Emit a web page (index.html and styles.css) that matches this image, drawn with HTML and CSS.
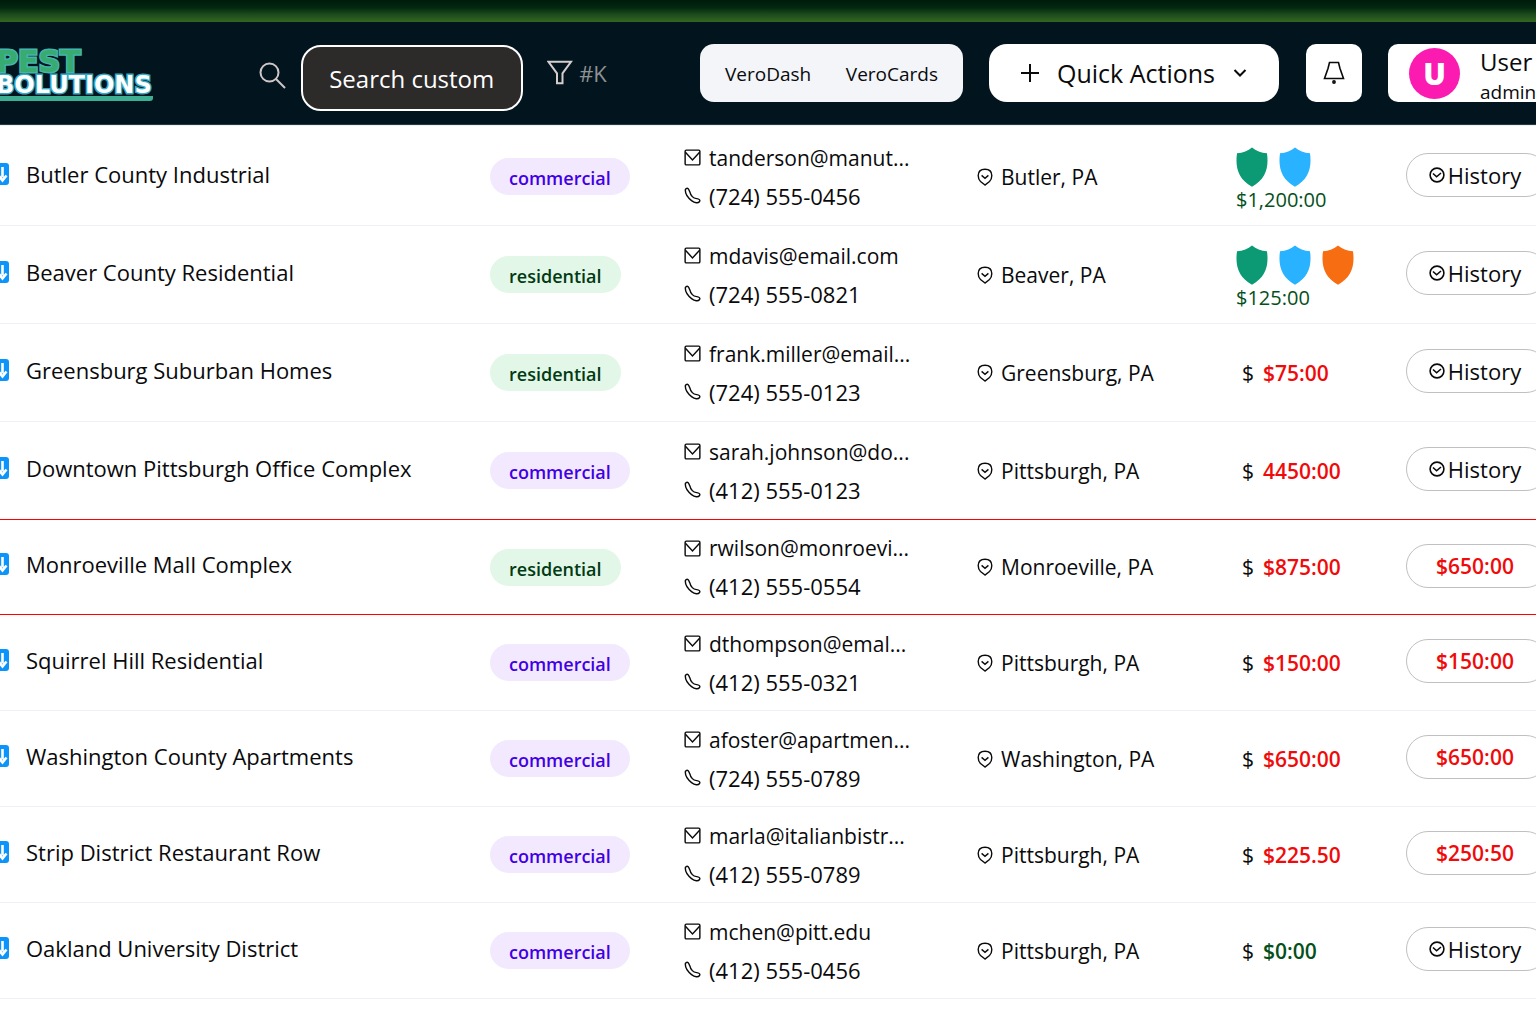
FILE: index.html
```html
<!DOCTYPE html>
<html lang="en">
<head>
<meta charset="utf-8">
<meta name="viewport" content="width=device-width, initial-scale=1">
<title>Customers</title>
<link rel="stylesheet" href="styles.css">
</head>
<body>
<svg class="sprite" aria-hidden="true">
  <symbol id="mail" viewBox="0 0 18 18"><rect x="1.200" y="1.200" width="15.600" height="15.600" rx="1.200"/><path d="M1.500 3.500l7.500 8 7.500-8"/></symbol>
  <symbol id="phone" viewBox="0 0 18 18"><path d="M1.500 2.600C2.500 .8 4.200 .8 5 2.600L6.200 5.200C6.500 6.800 7.300 8.500 8.800 10.200C10.200 11.900 11.600 12.200 13.500 12.300C16.200 12.600 17.300 13.800 16.500 15.400C15 17.400 11.500 17.200 8 14.400C4.300 11.400 1 6.600 1.500 2.600Z"/></symbol>
  <symbol id="pin" viewBox="0 0 16 18"><path d="M8 17L3.500 13.500C1.800 12 1.200 10 1.200 7.600C1.200 3.500 4 1.200 8 1.200S14.800 3.500 14.800 7.600C14.800 10 14.200 12 12.500 13.500Z"/><path d="M4.600 7.400L8 10.300l3.400-2.900"/></symbol>
  <symbol id="check" viewBox="0 0 16 16"><circle cx="8" cy="8" r="6.900"/><path d="M4 6.500l3.600 3.300L12 6"/></symbol>
  <symbol id="shield" viewBox="0 0 32 40"><path d="M16 .5C20 4 25 6 31 6.200C33 21 29.500 32 16 39.800C2.500 32 -1 21 1 6.200C7 6 12 4 16 .5Z"/></symbol>
  <symbol id="sort" viewBox="0 0 18 22"><rect width="18" height="22" rx="3" fill="#0d94fb"/><path d="M11.500 4v10.500M7.500 12.500l4 5 4-5" fill="none" stroke="#fff" stroke-width="2.600"/></symbol>
</svg>

<div class="topband"></div>
<header class="header">
  <a class="logo" href="#" aria-label="Pest Bolutions home"><span class="logo-top">PEST</span><span class="logo-bottom">BOLUTIONS</span></a>
  <form class="search" role="search">
    <svg class="search-icon" viewBox="0 0 28 28" aria-hidden="true"><circle cx="10.500" cy="10.500" r="9"/><path d="M17 17l9 9"/></svg>
    <input class="search-input" type="text" aria-label="Search customers" value="Search custom">
    <button class="filter" type="button" aria-label="Filter"><svg viewBox="0 0 26 26" aria-hidden="true"><path d="M1.500 1.800h22.500l-8.500 11.500v10h-5.500v-10z"/></svg><span>#K</span></button>
  </form>
  <nav class="views"><a href="#">VeroDash</a><a href="#">VeroCards</a></nav>
  <button class="quick" type="button">
    <svg class="plus" viewBox="0 0 18 18" aria-hidden="true"><path d="M9 0v18M0 9h18"/></svg>
    <span>Quick Actions</span>
    <svg class="chevron" viewBox="0 0 14 10" aria-hidden="true"><path d="M1.500 2L7 7.500 12.500 2"/></svg>
  </button>
  <button class="bell" type="button" aria-label="Notifications"><svg viewBox="0 0 22 24" aria-hidden="true"><path d="M6.500 1.500h9l1.500 6 3.500 10h-19l3.500-10z"/><circle cx="11" cy="21" r="1.100"/></svg></button>
  <button class="user" type="button"><span class="avatar">U</span><span class="who"><span class="who-name">User</span><span class="who-mail">admin@</span></span></button>
</header>

<main class="main">
<table class="customers">
  <colgroup><col><col class="c-type"><col class="c-contact"><col class="c-place"><col class="c-balance"><col class="c-action"></colgroup>
  <tbody>
  <tr class="tall">
    <td><div class="name"><svg><use href="#sort"/></svg>Butler County Industrial</div></td>
    <td><span class="tag commercial">commercial</span></td>
    <td><div class="line email"><svg><use href="#mail"/></svg>tanderson@manut...</div><div class="line"><svg><use href="#phone"/></svg>(724) 555-0456</div></td>
    <td><div class="place"><svg><use href="#pin"/></svg>Butler, PA</div></td>
    <td><div class="credit"><div class="shields"><svg class="green"><use href="#shield"/></svg><svg class="blue"><use href="#shield"/></svg></div>$1,200:00</div></td>
    <td><button class="pill" type="button"><svg><use href="#check"/></svg>History</button></td>
  </tr>
  <tr class="tall">
    <td><div class="name"><svg><use href="#sort"/></svg>Beaver County Residential</div></td>
    <td><span class="tag residential">residential</span></td>
    <td><div class="line email"><svg><use href="#mail"/></svg>mdavis@email.com</div><div class="line"><svg><use href="#phone"/></svg>(724) 555-0821</div></td>
    <td><div class="place"><svg><use href="#pin"/></svg>Beaver, PA</div></td>
    <td><div class="credit"><div class="shields"><svg class="green"><use href="#shield"/></svg><svg class="blue"><use href="#shield"/></svg><svg class="orange"><use href="#shield"/></svg></div>$125:00</div></td>
    <td><button class="pill" type="button"><svg><use href="#check"/></svg>History</button></td>
  </tr>
  <tr class="tall">
    <td><div class="name"><svg><use href="#sort"/></svg>Greensburg Suburban Homes</div></td>
    <td><span class="tag residential">residential</span></td>
    <td><div class="line email"><svg><use href="#mail"/></svg>frank.miller@email...</div><div class="line"><svg><use href="#phone"/></svg>(724) 555-0123</div></td>
    <td><div class="place"><svg><use href="#pin"/></svg>Greensburg, PA</div></td>
    <td><div class="balance"><span>$</span><strong>$75:00</strong></div></td>
    <td><button class="pill" type="button"><svg><use href="#check"/></svg>History</button></td>
  </tr>
  <tr class="tall">
    <td><div class="name"><svg><use href="#sort"/></svg>Downtown Pittsburgh Office Complex</div></td>
    <td><span class="tag commercial">commercial</span></td>
    <td><div class="line email"><svg><use href="#mail"/></svg>sarah.johnson@do...</div><div class="line"><svg><use href="#phone"/></svg>(412) 555-0123</div></td>
    <td><div class="place"><svg><use href="#pin"/></svg>Pittsburgh, PA</div></td>
    <td><div class="balance"><span>$</span><strong>4450:00</strong></div></td>
    <td><button class="pill" type="button"><svg><use href="#check"/></svg>History</button></td>
  </tr>
  <tr class="overdue">
    <td><div class="name"><svg><use href="#sort"/></svg>Monroeville Mall Complex</div></td>
    <td><span class="tag residential">residential</span></td>
    <td><div class="line email"><svg><use href="#mail"/></svg>rwilson@monroevi...</div><div class="line"><svg><use href="#phone"/></svg>(412) 555-0554</div></td>
    <td><div class="place"><svg><use href="#pin"/></svg>Monroeville, PA</div></td>
    <td><div class="balance"><span>$</span><strong>$875:00</strong></div></td>
    <td><button class="pill due" type="button">$650:00</button></td>
  </tr>
  <tr>
    <td><div class="name"><svg><use href="#sort"/></svg>Squirrel Hill Residential</div></td>
    <td><span class="tag commercial">commercial</span></td>
    <td><div class="line email"><svg><use href="#mail"/></svg>dthompson@emal...</div><div class="line"><svg><use href="#phone"/></svg>(412) 555-0321</div></td>
    <td><div class="place"><svg><use href="#pin"/></svg>Pittsburgh, PA</div></td>
    <td><div class="balance"><span>$</span><strong>$150:00</strong></div></td>
    <td><button class="pill due" type="button">$150:00</button></td>
  </tr>
  <tr>
    <td><div class="name"><svg><use href="#sort"/></svg>Washington County Apartments</div></td>
    <td><span class="tag commercial">commercial</span></td>
    <td><div class="line email"><svg><use href="#mail"/></svg>afoster@apartmen...</div><div class="line"><svg><use href="#phone"/></svg>(724) 555-0789</div></td>
    <td><div class="place"><svg><use href="#pin"/></svg>Washington, PA</div></td>
    <td><div class="balance"><span>$</span><strong>$650:00</strong></div></td>
    <td><button class="pill due" type="button">$650:00</button></td>
  </tr>
  <tr>
    <td><div class="name"><svg><use href="#sort"/></svg>Strip District Restaurant Row</div></td>
    <td><span class="tag commercial">commercial</span></td>
    <td><div class="line email"><svg><use href="#mail"/></svg>marla@italianbistr...</div><div class="line"><svg><use href="#phone"/></svg>(412) 555-0789</div></td>
    <td><div class="place"><svg><use href="#pin"/></svg>Pittsburgh, PA</div></td>
    <td><div class="balance"><span>$</span><strong>$225.50</strong></div></td>
    <td><button class="pill due" type="button">$250:50</button></td>
  </tr>
  <tr>
    <td><div class="name"><svg><use href="#sort"/></svg>Oakland University District</div></td>
    <td><span class="tag commercial">commercial</span></td>
    <td><div class="line email"><svg><use href="#mail"/></svg>mchen@pitt.edu</div><div class="line"><svg><use href="#phone"/></svg>(412) 555-0456</div></td>
    <td><div class="place"><svg><use href="#pin"/></svg>Pittsburgh, PA</div></td>
    <td><div class="balance clear"><span>$</span><strong>$0:00</strong></div></td>
    <td><button class="pill" type="button"><svg><use href="#check"/></svg>History</button></td>
  </tr>
  </tbody>
</table>
</main>
</body>
</html>
```
FILE: styles.css
```css
* { box-sizing: border-box; }
body {
  margin: 0;
  overflow-x: hidden;
  background: #fff;
  color: #0a0a0c;
  font-family: "Open Sans", "Noto Sans", sans-serif;
  font-size: 22px;
  line-height: 26px;
}
button, input { font: inherit; color: inherit; }
button { border: 0; padding: 0; cursor: pointer; }
a { color: inherit; text-decoration: none; }
svg { flex: none; fill: none; stroke: currentColor; }
.sprite { display: none; }

.topband {
  height: 22px;
  background: linear-gradient(#001a0b, #02280f 35%, #1c4a1c 65%, #33661f);
}
.header {
  display: flex;
  align-items: flex-start;
  height: 103px;
  padding-top: 22px;
  background: #02141d;
  border-bottom: 1px solid #2a3a42;
}

.logo {
  width: 166px;
  flex: none;
  padding-top: 5px;
  font-family: "DejaVu Sans", sans-serif;
  font-weight: 700;
}
.logo span { display: block; margin-left: -4px; white-space: nowrap; paint-order: stroke fill; }
.logo-top {
  font-size: 30px;
  line-height: 25px;
  color: #37ab70;
  -webkit-text-stroke: 3px #45b4ae;
}
.logo-bottom {
  width: 157px;
  font-size: 24px;
  line-height: 22px;
  color: #fff;
  -webkit-text-stroke: 3px #36a9c4;
  border-bottom: 5px solid #3eaf92;
  border-radius: 0 0 3px 0;
}

.search { display: flex; align-items: flex-start; margin: 0 auto; flex: none; }
.search-icon { width: 28px; height: 28px; margin: 18px 14px 0 0; color: #cfc6c8; stroke-width: 2; }
.search-input {
  width: 222px;
  height: 66px;
  padding: 0 20px 0 26px;
  margin-top: 1px;
  font-size: 24px;
  color: #fff;
  background: #2d2a2a;
  border: 2px solid #fff;
  border-radius: 20px;
}
.filter {
  display: flex;
  align-items: center;
  gap: 6px;
  margin: 16px 0 0 24px;
  background: none;
  color: #8f9193;
}
.filter svg { width: 26px; height: 26px; color: #d6cdcd; stroke-width: 2; }

.views {
  display: flex;
  align-items: center;
  justify-content: space-between;
  flex: none;
  width: 263px;
  height: 58px;
  padding: 2px 25px 0;
  font-size: 19px;
  background: #f3f5f8;
  border-radius: 14px;
}
.quick {
  display: flex;
  align-items: center;
  flex: none;
  justify-content: space-between;
  width: 290px;
  height: 58px;
  margin-left: 26px;
  padding: 0 32px;
  font-size: 25px;
  background: #fff;
  border-radius: 18px;
}
.plus { width: 18px; height: 18px; stroke-width: 2; }
.chevron { width: 14px; height: 10px; stroke-width: 2; }
.bell {
  display: flex;
  align-items: center;
  justify-content: center;
  flex: none;
  width: 56px;
  height: 58px;
  margin-left: 27px;
  background: #fff;
  border-radius: 10px;
}
.bell svg { width: 22px; height: 24px; stroke-width: 1.6; }
.user {
  display: flex;
  align-items: center;
  flex: none;
  gap: 20px;
  width: 148px;
  height: 58px;
  margin-left: 26px;
  padding-left: 21px;
  overflow: hidden;
  text-align: left;
  background: #fff;
  border-radius: 10px 0 0 10px;
}
.avatar {
  flex: none;
  width: 51px;
  font-size: 30px;
  font-weight: 800;
  line-height: 51px;
  text-align: center;
  color: #fff;
  background: #fb1bb0;
  border-radius: 50%;
}
.who { padding-top: 8px; }
.who span { display: block; line-height: 31px; }
.who-name { font-size: 24px; }
.who-mail { font-size: 19px; }

.main { overflow: hidden; padding-top: 2px; border-top: 1px solid #eceff5; }
.customers { width: 100%; table-layout: fixed; border-collapse: separate; border-spacing: 0; }
.c-type { width: 194px; }
.c-contact { width: 293px; }
.c-place { width: 259px; }
.c-balance { width: 170px; }
.c-action { width: 130px; }
td { height: 96px; padding: 0; vertical-align: middle; white-space: nowrap; border-bottom: 1px solid #edf0f6; }
.tall td { height: 98px; }
.tall:has(+ .overdue) td { height: 97px; border-bottom: 0; }
.overdue td { border-top: 1px solid #ff0000; border-bottom: 1px solid #ff0000; }

.name { display: flex; align-items: center; gap: 17px; margin-left: -9px; padding-bottom: 6px; }
.name svg { width: 18px; height: 22px; stroke: none; }
.tag {
  display: inline-block;
  padding: 3px 19px 0;
  height: 37px;
  font-size: 18px;
  font-weight: 600;
  line-height: 34px;
  vertical-align: middle;
  border-radius: 19px;
}
.commercial { color: #3f00e6; background: #f2e9fe; }
.residential { color: #023a14; background: #e2f7e7; }
.line { display: flex; align-items: center; gap: 8px; line-height: 38px; }
.line svg { width: 17px; height: 17px; stroke-width: 1.5; }
.email { font-size: 21px; }
.place { display: flex; align-items: center; gap: 8px; font-size: 21px; }
.place svg { width: 16px; height: 18px; stroke-width: 1.4; }
.credit { padding-top: 6px; font-size: 20px; color: #04501a; }
.shields { display: flex; gap: 11px; height: 40px; }
.shields svg { width: 32px; height: 40px; stroke: none; }
.green { fill: #0b9a74; }
.blue { fill: #29b2ff; }
.orange { fill: #f76d12; }
.balance { display: flex; gap: 9px; padding-left: 6px; font-size: 21px; }
.balance strong { font-weight: 600; color: #f00a0a; }
.balance.clear strong { color: #04501a; }
.pill {
  display: flex;
  align-items: center;
  justify-content: center;
  gap: 3px;
  width: 142px;
  height: 44px;
  margin-bottom: 3px;
  padding-right: 4px;
  background: #fff;
  border: 1px solid #bfc0c4;
  border-radius: 22px;
}
.pill svg { width: 16px; height: 16px; stroke-width: 1.6; }
.due { font-size: 21px; font-weight: 600; color: #f00a0a; }
```
